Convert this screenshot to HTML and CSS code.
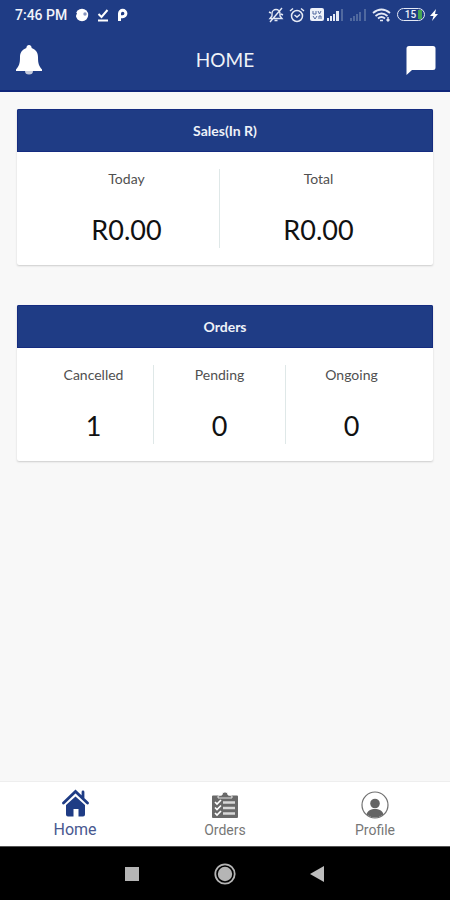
FILE: index.html
```html
<!DOCTYPE html>
<html lang="en">
<head>
<meta charset="utf-8">
<meta name="viewport" content="width=device-width, initial-scale=1">
<title>Home</title>
<link rel="stylesheet" href="styles.css">
</head>
<body>
<div class="status">
  <div class="status-group">
    <span class="time">7:46 PM</span>
    <svg width="14" height="14" viewBox="0 0 14 14"><circle cx="7" cy="7" r="6.200" fill="#fff"/><circle cx="10" cy="6" r="1.700" fill="#8795bd"/><path d="M0 4l2 1-1 3-1 1z" fill="#1f3c85"/></svg>
    <svg width="12" height="14" viewBox="0 0 12 14" fill="none" stroke="#fff" stroke-width="2"><path d="M1.500 6l3 3L10.500 2M1 12.500h10"/></svg>
    <svg width="11" height="14" viewBox="0 0 11 14" fill="none" stroke="#fff" stroke-width="3"><path d="M2.500 13V5.500a3.200 3.200 0 1 1 3.200 3.200H4"/></svg>
  </div>
  <div class="status-group status-right">
    <svg width="16" height="16" viewBox="0 0 16 16" fill="none" stroke="#e4e9f5" stroke-width="1.400"><path d="M2 11.500h12l-2-2.500V6.500a4 4 0 0 0-8 0V9zM6.500 13.500h3M14 1L2 15M1 5l2 1M15 8l-2-1"/></svg>
    <svg width="16" height="16" viewBox="0 0 16 16" fill="none" stroke="#e4e9f5" stroke-width="1.500"><circle cx="8" cy="9" r="5.500"/><path d="M1 4l3-2.500M15 4l-3-2.500M5.500 8L8 10l3-2.500"/></svg>
    <svg width="57" height="14" viewBox="0 0 57 14"><rect width="14" height="13" rx="2" fill="#eef1f9"/><path d="M3 3v3h3V3M8 3l1.500 3L11 3M3 8l2 3 2-3M9 11V8h2v3" fill="none" stroke="#52699f" stroke-width="1"/><path d="M17 10h2v3h-2zM20 8h2v5h-2zM23 6h2v7h-2zM26 3h3v10h-3z" fill="#e4e9f5"/><path d="M31 1h2v12h-2zM40 10h2v3h-2zM43 8h2v5h-2zM46 6h2v7h-2zM49 4h2v9h-2zM54 1h2v12h-2z" fill="#50699f"/></svg>
    <svg width="20" height="14" viewBox="0 0 20 14" fill="none" stroke="#e4e9f5" stroke-width="1.800"><path d="M1 5q8.500-7 17 0M3.500 8q6-5 12 0M6 10.500q3.500-3 7 0"/><path d="M8 12.500h3M16 9v4M14.500 11.500l1.500 1.500 1.500-1.500" stroke-width="1.400"/></svg>
    <span class="battery">15<i class="charge"></i></span>
    <svg width="9" height="14" viewBox="0 0 9 14"><path d="M6 1L0 8h3.500L2 13l6-7H5z" fill="#fff"/></svg>
  </div>
</div>
<header class="header">
  <button class="icon-button" aria-label="Notifications"><svg width="30" height="32" viewBox="0 0 30 32"><path d="M11 27a4 3.500 0 0 0 8 0z" fill="#c5cbdc"/><path d="M15 1a2.600 2.600 0 0 0-2.600 3C8 5.500 6 9 6 13c0 7-1 9-4 12.500V27h26v-1.500C25 22 24 20 24 13c0-4-2-7.500-6.400-9A2.600 2.600 0 0 0 15 1z" fill="#fff"/></svg></button>
  <h1 class="title">HOME</h1>
  <button class="icon-button" aria-label="Messages"><svg width="30" height="32" viewBox="0 0 30 32"><path d="M3 2h24a2.500 2.500 0 0 1 2.500 2.500v19A2.500 2.500 0 0 1 27 26H6l-5.500 5V4.500A2.500 2.500 0 0 1 3 2z" fill="#fff"/></svg></button>
</header>
<main class="content">
  <section class="card">
    <h2 class="card-title">Sales(In R)</h2>
    <dl class="stats">
      <div class="stat"><dt>Today</dt><dd>R0.00</dd></div>
      <div class="stat"><dt>Total</dt><dd>R0.00</dd></div>
    </dl>
  </section>
  <section class="card">
    <h2 class="card-title">Orders</h2>
    <dl class="stats">
      <div class="stat"><dt>Cancelled</dt><dd>1</dd></div>
      <div class="stat"><dt>Pending</dt><dd>0</dd></div>
      <div class="stat"><dt>Ongoing</dt><dd>0</dd></div>
    </dl>
  </section>
</main>
<nav class="tabs">
  <a class="tab active" href="#home"><svg width="28" height="28" viewBox="0 0 28 28"><path d="M5 16l9.500-8.500L24 16v9.500a2 2 0 0 1-2 2h-4.500V20h-5v7.500H7a2 2 0 0 1-2-2z" fill="#1f3c85"/><path d="M2.500 14L14.500 2.500 26.500 14M22 3v6" fill="none" stroke="#fff" stroke-width="5"/><path d="M2.500 14L14.500 2.500 26.500 14M22 3v6" fill="none" stroke="#1f3c85" stroke-width="2.800" stroke-linecap="round"/></svg><span>Home</span></a>
  <a class="tab" href="#orders"><svg width="28" height="28" viewBox="0 0 28 28"><path d="M2 4.500h24a1 1 0 0 1 1 1V26a1 1 0 0 1-1 1H2a1 1 0 0 1-1-1V5.500a1 1 0 0 1 1-1z" fill="#696969"/><path d="M7 7V5l4-1a3 3 0 0 1 6 0l4 1v2z" fill="#696969" stroke="#fff" stroke-width=".8"/><path d="M12 11.500h12M12 17h12M12 22.500h12" stroke="#d8d8d8" stroke-width="2.600"/><path d="M4 11l2 2 4-4M4 16.500l2 2 4-4M4 22l2 2 4-4" fill="none" stroke="#fff" stroke-width="1.700"/></svg><span>Orders</span></a>
  <a class="tab" href="#profile"><svg width="28" height="28" viewBox="0 0 28 28"><circle cx="14" cy="14" r="13" fill="none" stroke="#707070" stroke-width="1.200"/><circle cx="14" cy="12.500" r="4.800" fill="#656565"/><path d="M5.500 23.500c1-4 4.500-5.500 8.500-5.500s7.500 1.500 8.500 5.500q-8.500 6-17 0z" fill="#656565"/></svg><span>Profile</span></a>
</nav>
<div class="system">
  <button class="system-button" aria-label="Recent apps"><svg width="22" height="22" viewBox="0 0 22 22"><rect x="4" y="4" width="14" height="14" fill="#b5b5b5"/></svg></button>
  <button class="system-button" aria-label="Home screen"><svg width="22" height="22" viewBox="0 0 22 22"><circle cx="11" cy="11" r="9.700" fill="none" stroke="#b5b5b5" stroke-width="1.800"/><circle cx="11" cy="11" r="7.200" fill="#b5b5b5"/></svg></button>
  <button class="system-button" aria-label="Back"><svg width="22" height="22" viewBox="0 0 22 22"><path d="M3 11l14-8v16z" fill="#bdbdbd"/></svg></button>
</div>
</body>
</html>
```
FILE: styles.css
```css
* { box-sizing: border-box; }

body {
  margin: 0;
  min-height: 100vh;
  display: flex;
  flex-direction: column;
  background: #f8f8f8;
  color: #111;
  font-family: Lato, sans-serif;
}

h1, h2, dl, dd { margin: 0; }
svg { display: block; flex: none; }
button { padding: 0; border: 0; background: none; }

.status {
  display: flex;
  justify-content: space-between;
  align-items: center;
  height: 29px;
  padding: 0 11px 0 15px;
  background: #1f3c85;
  color: #f2f4fa;
  font: 500 14px Roboto, sans-serif;
}
.status-group { display: flex; align-items: center; gap: 8px; }
.status-right { gap: 5px; }
.battery {
  display: flex;
  align-items: center;
  justify-content: center;
  gap: 2px;
  width: 28px;
  height: 13px;
  padding-left: 5px;
  border: 1px solid #e4e9f5;
  border-radius: 7px;
  font-size: 10px;
}
.charge { width: 4px; height: 9px; background: #45a653; }

.header {
  display: flex;
  align-items: center;
  justify-content: space-between;
  height: 63px;
  padding: 0 14px;
  border-bottom: 2px solid #10267a;
  background: #1f3c85;
}
.icon-button { color: #fff; }
.title { color: #eef2f8; font-size: 19px; font-weight: 400; line-height: 24px; }

.content {
  flex: 1;
  display: flex;
  flex-direction: column;
  gap: 40px;
  padding: 17px;
}
.card {
  overflow: hidden;
  border-radius: 2px;
  background: #fff;
  box-shadow: 0 1px 2px #ccc;
}
.card-title {
  border: 1px solid #152c80;
  background: #1f3c85;
  color: #eef2f8;
  font-size: 14px;
  font-weight: 700;
  line-height: 41px;
  text-align: center;
}
.stats {
  display: grid;
  grid-auto-flow: column;
  grid-auto-columns: minmax(0, 1fr);
  padding: 17px 16px 17px 4px;
}
.stat { text-align: center; }
.stat:first-child { padding-left: 13px; }
.stat + .stat { border-left: 1px solid #dfe8e8; }
.stat dt { color: #505050; font-size: 14px; line-height: 20px; }
.stat dd { padding: 24px 0 1px; font-size: 27px; line-height: 34px; }

.tabs {
  display: flex;
  height: 65px;
  border-top: 1px solid #eee;
  background: #fff;
}
.tab {
  flex: 1;
  display: flex;
  flex-direction: column;
  align-items: center;
  gap: 2px;
  padding-top: 9px;
  color: #777;
  font: 400 14px/18px Roboto, sans-serif;
  text-decoration: none;
}
.active { gap: 4px; padding-top: 7px; color: #485890; font-size: 16px; }

.system {
  display: flex;
  justify-content: center;
  align-items: center;
  gap: 71px;
  height: 54px;
  border-top: 1px solid #555;
  background: #000;
}
```
